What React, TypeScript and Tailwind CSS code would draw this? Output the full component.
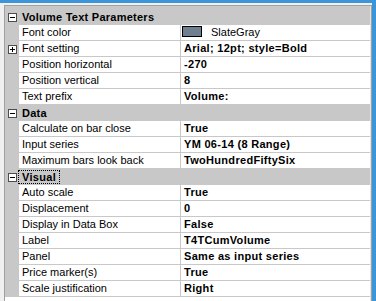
import React from 'react';

type Row =
  | { kind: 'cat'; label: string; focus?: boolean }
  | { kind: 'prop'; label: string; value: string; expand?: boolean; swatch?: string; plain?: boolean };

const rows: Row[] = [
  { kind: 'cat', label: 'Volume Text Parameters' },
  { kind: 'prop', label: 'Font color', value: 'SlateGray', swatch: '#708090', plain: true },
  { kind: 'prop', label: 'Font setting', value: 'Arial; 12pt; style=Bold', expand: true },
  { kind: 'prop', label: 'Position horizontal', value: '-270' },
  { kind: 'prop', label: 'Position vertical', value: '8' },
  { kind: 'prop', label: 'Text prefix', value: 'Volume:' },
  { kind: 'cat', label: 'Data' },
  { kind: 'prop', label: 'Calculate on bar close', value: 'True' },
  { kind: 'prop', label: 'Input series', value: 'YM 06-14 (8 Range)' },
  { kind: 'prop', label: 'Maximum bars look back', value: 'TwoHundredFiftySix' },
  { kind: 'cat', label: 'Visual', focus: true },
  { kind: 'prop', label: 'Auto scale', value: 'True' },
  { kind: 'prop', label: 'Displacement', value: '0' },
  { kind: 'prop', label: 'Display in Data Box', value: 'False' },
  { kind: 'prop', label: 'Label', value: 'T4TCumVolume' },
  { kind: 'prop', label: 'Panel', value: 'Same as input series' },
  { kind: 'prop', label: 'Price marker(s)', value: 'True' },
  { kind: 'prop', label: 'Scale justification', value: 'Right' },
];

function Box({ plus }: { plus?: boolean }) {
  return (
    <svg width="9" height="9" viewBox="0 0 9 9" className="block">
      <rect x="0.5" y="0.5" width="8" height="8" fill="#ffffff" stroke="#4d4d4d" />
      <path d="M2 4.5H7" stroke="#000" strokeWidth="1" />
      {plus && <path d="M4.5 2V7" stroke="#000" strokeWidth="1" />}
    </svg>
  );
}

function GridRow({ row }: { row: Row }) {
  if (row.kind === 'cat') {
    return (
      <div className="flex h-[16px] items-center bg-[#c8c8c8]">
        <div className="flex w-[14px] shrink-0 justify-center pl-[1px]">
          <Box />
        </div>
        <div
          className={
            row.focus
              ? 'ml-[-1px] h-[14px] border border-dotted border-black px-[3px] font-bold leading-[13px] tracking-[0.3px]'
              : 'pl-[3px] font-bold tracking-[0.25px]'
          }
        >
          {row.label}
        </div>
      </div>
    );
  }
  return (
    <div className="flex h-[16px] bg-[#c8c8c8]">
      <div className="flex w-[14px] shrink-0 items-center justify-center pl-[1px]">
        {row.expand && <Box plus />}
      </div>
      <div className="flex h-[16px] w-[162px] shrink-0 items-center border-r border-b border-[#c8c8c8] bg-white pl-[3px]">
        {row.label}
      </div>
      <div className="flex h-[16px] flex-1 items-center border-b border-[#c8c8c8] bg-white">
        {row.swatch ? (
          <>
            <span
              className="ml-[1px] mt-[-2px] h-[11px] w-[20px] border border-black"
              style={{ backgroundColor: row.swatch }}
            />
            <span className="ml-[9px]">{row.value}</span>
          </>
        ) : (
          <span className={row.plain ? 'pl-[3px]' : 'pl-[3px] font-bold tracking-[0.3px]'}>{row.value}</span>
        )}
      </div>
    </div>
  );
}

export default function App() {
  return (
    <div
      className="flex h-[301px] w-[376px] overflow-hidden bg-[#f0f0f0] text-[11px] text-black"
      style={{ fontFamily: '"Liberation Sans", Arial, sans-serif' }}
    >
      <div className="flex flex-1 flex-col">
        <div className="h-[3px] bg-[#3b95d9]" />
        <div className="flex flex-1 flex-col pt-[2px] pl-[4px]">
          <div className="flex flex-1 flex-col border-l border-t border-r border-[#a0a0a0] bg-white">
            <div className="flex flex-1 flex-col border-r border-[#e3e3e3]">
              <div className="h-[3px] bg-[#c8c8c8]" />
              {rows.map((r, i) => (
                <GridRow key={i} row={r} />
              ))}
              <div className="flex-1 bg-white" />
            </div>
          </div>
        </div>
      </div>
      <div className="w-[4px] bg-[#3b95d9]" />
    </div>
  );
}
